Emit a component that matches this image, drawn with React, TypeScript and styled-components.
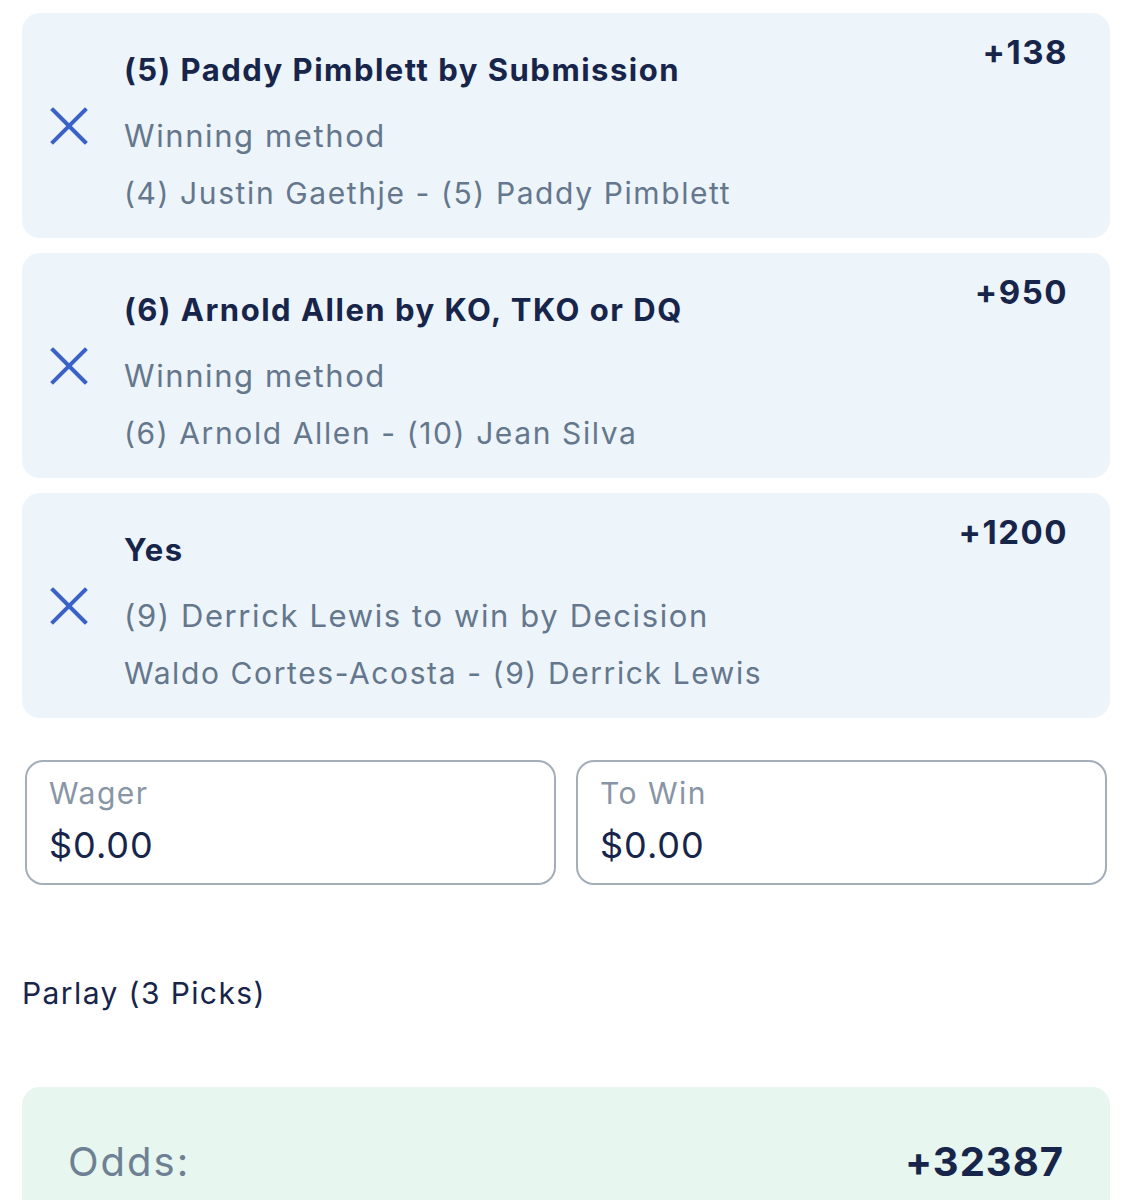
import styled, { createGlobalStyle } from 'styled-components';

const GlobalStyle = createGlobalStyle`
    body {
        margin: 0;
        background: #ffffff;
        font-family: Inter, "Open Sans", sans-serif;
    }
`

interface Pick {
    title: string;
    market: string;
    matchup: string;
    odds: string;
}

const picks: Pick[] = [
    {
        title: '(5) Paddy Pimblett by Submission',
        market: 'Winning method',
        matchup: '(4) Justin Gaethje - (5) Paddy Pimblett',
        odds: '+138',
    },
    {
        title: '(6) Arnold Allen by KO, TKO or DQ',
        market: 'Winning method',
        matchup: '(6) Arnold Allen - (10) Jean Silva',
        odds: '+950',
    },
    {
        title: 'Yes',
        market: '(9) Derrick Lewis to win by Decision',
        matchup: 'Waldo Cortes-Acosta - (9) Derrick Lewis',
        odds: '+1200',
    },
]

const StyledPage = styled.div`
    display: flex;
    flex-direction: column;
    padding: 13px 23px 0 22px;
`

const StyledList = styled.div`
    display: flex;
    flex-direction: column;
    gap: 15px;
`

const StyledCard = styled.div`
    display: grid;
    grid-template-columns: 102px 1fr auto;
    align-items: center;
    height: 225px;
    box-sizing: border-box;
    padding: 37px 42px 25px 0;
    border-radius: 18px;
    background-color: #edf4fa;
`

const StyledRemove = styled.button`
    display: flex;
    justify-content: center;
    align-items: center;
    width: 102px;
    height: 40px;
    margin: -12px 0 0 -4px;
    padding: 0;
    border: none;
    background: none;
    color: #3b63c7;
    cursor: pointer;
`

const StyledInfo = styled.div`
    display: flex;
    flex-direction: column;
    align-self: start;
`

const StyledTitle = styled.div`
    font-size: 31px;
    line-height: 40px;
    font-weight: 700;
    letter-spacing: 1.5px;
    color: #17254a;
`

const StyledMarket = styled.div`
    margin-top: 26px;
    font-size: 31px;
    line-height: 40px;
    letter-spacing: 1.6px;
    color: #64778c;
`

const StyledMatchup = styled.div`
    margin-top: 17px;
    font-size: 30px;
    line-height: 40px;
    letter-spacing: 1.6px;
    color: #64778c;
`

const StyledOdds = styled.div`
    align-self: start;
    margin-top: -18px;
    font-size: 33px;
    line-height: 40px;
    font-weight: 700;
    letter-spacing: 1.5px;
    color: #17254a;
`

const StyledInputs = styled.div`
    display: grid;
    grid-template-columns: 1fr 1fr;
    gap: 20px;
    margin-top: 42px;
    padding: 0 3px;
`

const StyledField = styled.label`
    display: flex;
    flex-direction: column;
    height: 125px;
    box-sizing: border-box;
    padding: 11px 22px 0;
    border: 2px solid #a4aeb9;
    border-radius: 18px;
    background: #ffffff;
`

const StyledLabel = styled.span`
    font-size: 30px;
    line-height: 40px;
    letter-spacing: 1.5px;
    color: #8795a5;
`

const StyledValue = styled.span`
    margin-top: 10px;
    font-size: 36px;
    line-height: 44px;
    letter-spacing: 1px;
    color: #17254a;
`

const StyledParlay = styled.div`
    margin-top: 88px;
    font-size: 30px;
    line-height: 40px;
    letter-spacing: 1.4px;
    color: #17254a;
`

const StyledSummary = styled.div`
    display: flex;
    justify-content: space-between;
    align-items: flex-start;
    margin-top: 74px;
    height: 160px;
    box-sizing: border-box;
    padding: 50px 46px 0 46px;
    border-radius: 18px 18px 0 0;
    background-color: #e7f6ee;
`

const StyledSummaryLabel = styled.span`
    font-size: 40px;
    line-height: 50px;
    letter-spacing: 2px;
    color: #6e8194;
`

const StyledSummaryValue = styled.span`
    font-size: 40px;
    line-height: 50px;
    font-weight: 700;
    letter-spacing: 1px;
    color: #17254a;
`

function CloseIcon() {
    return (
        <svg width="38" height="38" viewBox="0 0 38 38" fill="none">
            <path d="M3 3L35 35M35 3L3 35" stroke="currentColor" strokeWidth="4" strokeLinecap="square" />
        </svg>
    )
}

export default function App() {
    return (
        <>
            <GlobalStyle />
            <StyledPage>
                <StyledList>
                    {picks.map((pick) => (
                        <StyledCard key={pick.title}>
                            <StyledRemove aria-label="Remove pick">
                                <CloseIcon />
                            </StyledRemove>
                            <StyledInfo>
                                <StyledTitle>{pick.title}</StyledTitle>
                                <StyledMarket>{pick.market}</StyledMarket>
                                <StyledMatchup>{pick.matchup}</StyledMatchup>
                            </StyledInfo>
                            <StyledOdds>{pick.odds}</StyledOdds>
                        </StyledCard>
                    ))}
                </StyledList>
                <StyledInputs>
                    <StyledField>
                        <StyledLabel>Wager</StyledLabel>
                        <StyledValue>$0.00</StyledValue>
                    </StyledField>
                    <StyledField>
                        <StyledLabel>To Win</StyledLabel>
                        <StyledValue>$0.00</StyledValue>
                    </StyledField>
                </StyledInputs>
                <StyledParlay>Parlay (3 Picks)</StyledParlay>
                <StyledSummary>
                    <StyledSummaryLabel>Odds:</StyledSummaryLabel>
                    <StyledSummaryValue>+32387</StyledSummaryValue>
                </StyledSummary>
            </StyledPage>
        </>
    )
}
